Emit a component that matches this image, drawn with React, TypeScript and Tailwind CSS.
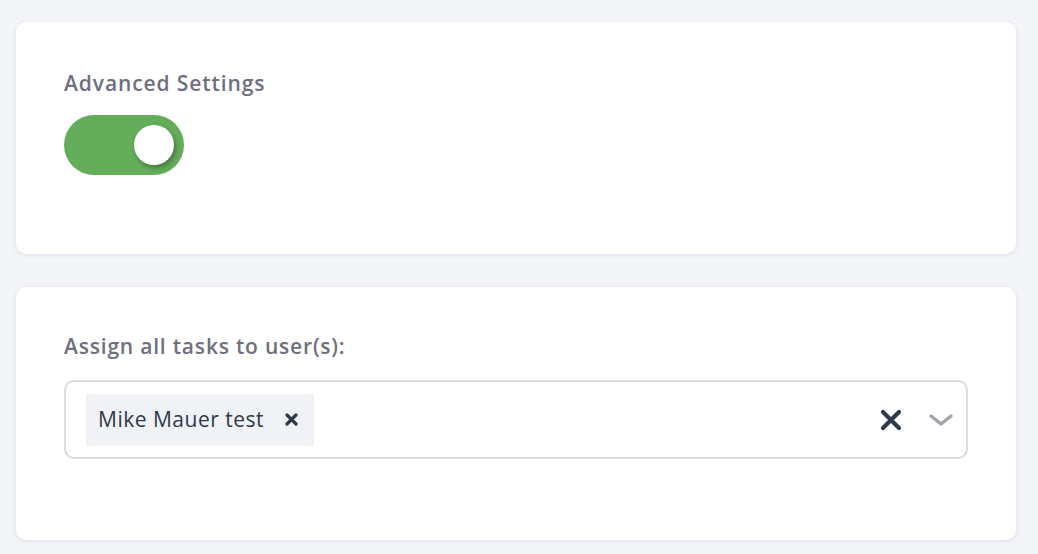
import { useState } from 'react';

function Toggle({ on, onChange }: { on: boolean; onChange: (v: boolean) => void }) {
  return (
    <button
      type="button"
      onClick={() => onChange(!on)}
      className={`flex items-center w-[120px] h-[60px] rounded-full px-[10px] ${on ? 'bg-[#64ad5a] justify-end' : 'bg-[#d6d8de] justify-start'}`}
    >
      <span className="block w-[40px] h-[40px] rounded-full bg-white shadow-[2px_3px_5px_rgba(0,0,0,0.3)]" />
    </button>
  );
}

export default function App() {
  const [advanced, setAdvanced] = useState(true);

  return (
    <div className="min-h-screen bg-[#f4f5f9] pl-4 pr-[22px] pt-[22px] pb-4 font-['Open_Sans',sans-serif]">
      {/* Advanced settings */}
      <div className="bg-white rounded-[10px] shadow-[0_1px_4px_rgba(30,40,70,0.12)] h-[232px] px-12 pt-[46px]">
        <h3 className="text-[21px] tracking-[0.9px] font-semibold text-[#6e7080] leading-[30px]">Advanced Settings</h3>
        <div className="mt-[17px]">
          <Toggle on={advanced} onChange={setAdvanced} />
        </div>
      </div>

      {/* Assignees */}
      <div className="mt-[33px] bg-white rounded-[10px] shadow-[0_1px_4px_rgba(30,40,70,0.12)] h-[253px] px-12 pt-[44px]">
        <label className="block text-[21px] tracking-[0.8px] font-semibold text-[#6e7080] leading-[30px]">Assign all tasks to user(s):</label>
        <div className="mt-[19px] flex items-center h-[79px] border-2 border-[#dcdcdf] rounded-[10px] pl-5 pr-3">
          <div className="flex items-center h-[52px] bg-[#f0f2f5] pl-3 pr-4">
            <span className="text-[21px] tracking-[0.5px] text-[#2f394a]">Mike Mauer test</span>
            <svg className="ml-[21px]" width="13" height="13" viewBox="0 0 13 13">
              <path d="M2 2 L11 11 M11 2 L2 11" stroke="#2f394a" strokeWidth="3.2" strokeLinecap="round" />
            </svg>
          </div>
          <div className="flex-1" />
          <svg width="22" height="22" viewBox="0 0 22 22">
            <path d="M3 3 L19 19 M19 3 L3 19" stroke="#2f394a" strokeWidth="4.2" strokeLinecap="round" />
          </svg>
          <svg className="ml-[26px]" width="26" height="14" viewBox="0 0 26 14">
            <path d="M3 3 L13 11 L23 3" stroke="#a3a5ad" strokeWidth="3.5" fill="none" strokeLinecap="round" strokeLinejoin="round" />
          </svg>
        </div>
      </div>
    </div>
  );
}
